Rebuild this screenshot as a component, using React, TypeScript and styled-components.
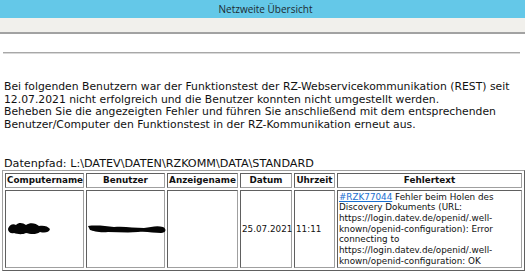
import React from "react";
import styled, { createGlobalStyle } from "styled-components";

const Global = createGlobalStyle`
  html, body { margin: 0; padding: 0; background: #ffffff; }
  body { font-family: "DejaVu Sans", Verdana, sans-serif; color: #000; }
`;

const TitleBar = styled.div`
  height: 18px;
  background: #64c8e8;
  display: flex;
  align-items: center;
  justify-content: center;
  font-family: "Open Sans", "Noto Sans", sans-serif;
  font-size: 10px;
  color: #1d2a30;
  padding-left: 6px;
`;

const Band = styled.div`
  height: 14px;
  background: #f1f0ec;
  border-bottom: 2px solid #a2a2a2;
`;

const Content = styled.div`
  padding: 18px 4px 0 3px;
`;

const Rule = styled.div`
  height: 1px;
  width: 517px;
  background: #a8a8a8;
  border-bottom: 1px solid #d8d8d8;
`;

const Intro = styled.p`
  margin: 27px 0 0 1px;
  font-size: 10.8px;
  line-height: 12.7px;
  color: #111;
  white-space: nowrap;
`;

const PathLine = styled.div`
  margin: 25px 0 0 1px;
  font-size: 11.2px;
  line-height: 13px;
  color: #111;
`;

const Table = styled.table`
  width: 519px;
  table-layout: fixed;
  border: 1px solid #a0a0a0;
  border-right-color: #606060;
  border-bottom-color: #606060;
  border-spacing: 2px;
  margin-left: -1px;
  font-size: 8.8px;
  line-height: 10.7px;
`;

const Th = styled.th<{ $w: number }>`
  width: ${(p) => p.$w}px;
  box-sizing: border-box;
  border: 1px solid #a0a0a0;
  border-top-color: #606060;
  border-left-color: #606060;
  padding: 1px 1px;
  font-weight: bold;
  text-align: center;
  color: #111;
  white-space: nowrap;
  overflow: hidden;
`;

const Td = styled.td<{ $top?: boolean }>`
  border: 1px solid #a0a0a0;
  border-top-color: #606060;
  border-left-color: #606060;
  padding: 1px 1px;
  vertical-align: ${(p) => (p.$top ? "top" : "middle")};
  color: #111;
`;

const Link = styled.a`
  color: #1a6fd0;
  text-decoration: underline;
`;

const Blot = styled.svg`
  display: block;
`;

const columns: [string, number][] = [
  ["Computername", 79],
  ["Benutzer", 79],
  ["Anzeigename", 71],
  ["Datum", 52],
  ["Uhrzeit", 41],
  ["Fehlertext", 185],
];

export default function App() {
  return (
    <>
      <Global />
      <TitleBar>Netzweite Übersicht</TitleBar>
      <Band />
      <Content>
        <Rule />
        <Intro>
          Bei folgenden Benutzern war der Funktionstest der RZ-Webservicekommunikation (REST) seit
          <br />
          12.07.2021 nicht erfolgreich und die Benutzer konnten nicht umgestellt werden.
          <br />
          Beheben Sie die angezeigten Fehler und führen Sie anschließend mit dem entsprechenden
          <br />
          Benutzer/Computer den Funktionstest in der RZ-Kommunikation erneut aus.
        </Intro>
        <PathLine>Datenpfad: L:\DATEV\DATEN\RZKOMM\DATA\STANDARD</PathLine>
        <Table>
          <thead>
            <tr>
              {columns.map(([name, w]) => (
                <Th key={name} $w={w}>
                  {name}
                </Th>
              ))}
            </tr>
          </thead>
          <tbody>
            <tr>
              <Td>
                <Blot width="44" height="15" viewBox="0 0 44 15">
                  <path
                    d="M1 8 C2 4 6 2 9 4 C12 1 16 2 19 4 C23 1 29 2 32 5 C36 4 41 5 43 8 C42 12 37 12 33 11 C29 14 23 13 19 12 C15 14 10 13 7 12 C4 13 1 11 1 8 Z"
                    fill="#050505"
                  />
                </Blot>
              </Td>
              <Td>
                <Blot width="79" height="12" viewBox="0 0 79 12">
                  <path
                    d="M0 3 C8 2 18 3 26 4 C36 3 46 5 56 5 C63 4 69 2 75 4 C79 6 78 10 73 10 C66 10 58 8 50 9 C40 10 30 9 20 9 C12 10 5 8 2 7 Z"
                    fill="#050505"
                  />
                </Blot>
              </Td>
              <Td />
              <Td>25.07.2021</Td>
              <Td>11:11</Td>
              <Td $top>
                <Link href="#">#RZK77044</Link> Fehler beim Holen des Discovery Dokuments (URL:
                https://login.datev.de/openid/.well-known/openid-configuration): Error connecting
                to https://login.datev.de/openid/.well-known/openid-configuration: OK
              </Td>
            </tr>
          </tbody>
        </Table>
      </Content>
    </>
  );
}
